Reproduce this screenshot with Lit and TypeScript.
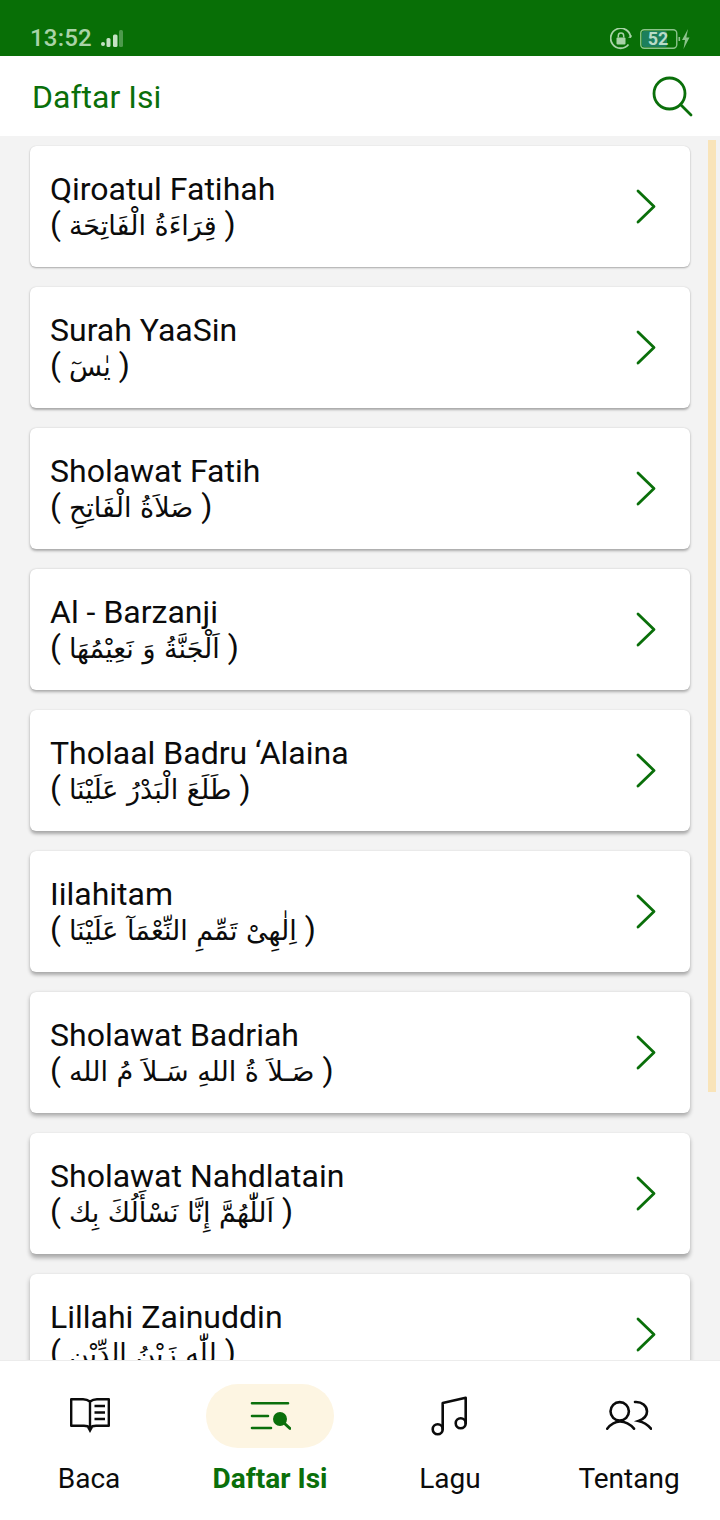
import { LitElement, html, css, svg } from "lit";
import { customElement } from "lit/decorators.js";

const ITEMS: [string, string][] = [
  ["Qiroatul Fatihah", "قِرَاءَةُ الْفَاتِحَة"],
  ["Surah YaaSin", "يٰسٓ"],
  ["Sholawat Fatih", "صَلاَةُ الْفَاتِحِ"],
  ["Al - Barzanji", "اَلْجَنَّةُ وَ نَعِيْمُهَا"],
  ["Tholaal Badru ‘Alaina", "طَلَعَ الْبَدْرُ عَلَيْنَا"],
  ["Iilahitam", "اِلٰهِىْ تَمِّمِ النِّعْمَآ عَلَيْنَا"],
  ["Sholawat Badriah", "صَـلاَ ةُ اللهِ سَـلاَ مُ الله"],
  ["Sholawat Nahdlatain", "اَللّٰهُمَّ إِنَّا نَسْأَلُكَ بِك"],
  ["Lillahi Zainuddin", "لِلّٰهِ زَيْنُ الدِّيْن"],
];

const G = "#0a6f0a";

const chevron = svg`<polyline points="2,2 18,17.5 2,33" fill="none" stroke="${G}" stroke-width="2.8" stroke-linecap="round" stroke-linejoin="round"/>`;

@customElement("app-root")
export class AppRoot extends LitElement {
  static styles = css`
    :host { display: flex; flex-direction: column; width: 720px; height: 1520px; overflow: hidden; background: #f3f3f3; font-family: Roboto, "Liberation Sans", sans-serif; color: #0b0b0b; }
    .status { height: 56px; flex: none; background: #086f06; display: flex; align-items: center; justify-content: space-between; padding: 21px 30px 0 30px; box-sizing: border-box; color: #a9d3a8; }
    .status-l, .status-r { display: flex; align-items: center; }
    .time { font-size: 24px; font-weight: 500; letter-spacing: 0.2px; margin-right: 8px; line-height: 35px; }
    .status-r { gap: 8px; }
    .battery { display: block; }
    .header { height: 80px; flex: none; background: #fff; display: flex; align-items: center; justify-content: space-between; padding: 0 18px 0 32px; box-sizing: border-box; }
    .header h1 { margin: 0; padding-top: 2px; font-size: 32px; font-weight: 400; color: #0a6f0a; }
    .list { flex: 1; min-height: 0; overflow: hidden; position: relative; padding: 10px 30px 0; display: flex; flex-direction: column; gap: 20px; }
    .thumb { position: absolute; left: 708px; top: 4px; width: 8px; height: 952px; background: #f9e4b9; }
    .card { flex: none; height: 121px; background: #fff; border-radius: 6px; display: flex; align-items: center; justify-content: space-between; padding: 0 34px 0 20px; box-sizing: border-box; }
    .texts { display: flex; flex-direction: column; padding-top: 1px; }
    .title { font-size: 32px; line-height: 37px; }
    .ar { font-size: 32px; line-height: 37px; margin-top: -2px; white-space: nowrap; }
    .ar bdi { font-family: "DejaVu Sans", "Noto Sans", sans-serif; font-size: 27px; }
    .nav { height: 160px; flex: none; background: #fff; border-top: 1px solid #ececec; box-sizing: border-box; display: grid; grid-template-columns: 178px 184px 176px 182px; }
    .tab { display: flex; flex-direction: column; align-items: center; padding-top: 23px; }
    .pill { width: 128px; height: 64px; border-radius: 32px; display: flex; align-items: center; justify-content: center; }
    .tab.on .pill { background: #fdf5e2; }
    .label { font-size: 28px; line-height: 32px; margin-top: 15px; }
    .tab.on .label { color: #0a6f0a; font-weight: 700; }
  `;

  render() {
    return html`
      <div class="status">
        <div class="status-l">
          <span class="time">13:52</span>
          <svg width="24" height="20" viewBox="0 0 24 20">
            <rect x="1" y="13" width="4" height="4" rx="2" fill="#c5e2c4"/>
            <rect x="6.500" y="9" width="4" height="9" rx="1.500" fill="#c5e2c4"/>
            <rect x="13" y="5.500" width="4.500" height="12.500" rx="1.500" fill="#c5e2c4"/>
            <rect x="19" y="1" width="4" height="17" rx="1.500" fill="#4d9a4c"/>
          </svg>
        </div>
        <div class="status-r">
          <svg width="22" height="22" viewBox="0 0 22 22">
            <path d="M18.500 16.500A10 10 0 1 1 20.600 9" fill="none" stroke="#a9d3a8" stroke-width="1.800"/>
            <path d="M18 9.500l3 .5 1-3z" fill="#a9d3a8"/>
            <rect x="6.500" y="9.500" width="9" height="7" rx="1" fill="#a9d3a8"/>
            <path d="M8.300 9.500V7.800a2.700 2.700 0 0 1 5.400 0v1.700" fill="none" stroke="#a9d3a8" stroke-width="1.500"/>
          </svg>
          <svg class="battery" width="50" height="22" viewBox="0 0 50 22">
            <rect x="0.750" y="1.750" width="36" height="18.500" rx="3.500" fill="none" stroke="#8cc38b" stroke-width="1.400"/>
            <rect x="2" y="3" width="25" height="16" rx="2" fill="#1c7f5c"/>
            <text x="18" y="17.300" text-anchor="middle" font-family="Roboto" font-size="18" font-weight="700" fill="#b8dcc6">52</text>
            <rect x="38.500" y="9" width="1.600" height="4" fill="#8cc38b"/>
            <path d="M48 1l-6 11h3L43.500 21l6-11.500h-3.200z" fill="#8cc38b"/>
          </svg>
        </div>
      </div>
      <div class="header">
        <h1>Daftar Isi</h1>
        <svg width="60" height="60" viewBox="-10 -10 60 60">
          <circle cx="17.500" cy="17.500" r="15.500" fill="none" stroke="${G}" stroke-width="2.800"/>
          <line x1="28.500" y1="28.500" x2="39" y2="39" stroke="${G}" stroke-width="2.800" stroke-linecap="round"/>
        </svg>
      </div>
      <div class="list">
        <div class="thumb"></div>
        ${ITEMS.map(([t, a], i) => html`
          <div class="card" style="box-shadow: 0 ${1 + i * 0.3}px ${2 + i * 0.35}px rgba(0,0,0,0.3), 0 0 1px rgba(0,0,0,0.12)">
            <div class="texts">
              <span class="title">${t}</span>
              <span class="ar">( <bdi dir="rtl">${a}</bdi> )</span>
            </div>
            <svg width="20" height="35" viewBox="0 0 20 35">${chevron}</svg>
          </div>`)}
      </div>
      <div class="nav">
        <div class="tab">
          <div class="pill">
            <svg width="44" height="36" viewBox="0 0 44 36" fill="none" stroke="#0b0b0b" stroke-width="2.400">
              <path d="M23 3.500C21 2 19 1.200 16 1.200H4.200V27.800H17c2.500 0 4.500.5 6 2 1.500-1.500 3.500-2 6-2h12.800V1.200H30C27 1.200 25 2 23 3.500z" stroke-linejoin="round"/>
              <path d="M23 3.500V31"/>
              <path d="M27.500 8h10.500M27.500 14.500h10.500M27.500 21h10.500"/>
              <path d="M20 29.500l3 5.500 3-5.500z" fill="#0b0b0b" stroke="none"/>
            </svg>
          </div>
          <span class="label">Baca</span>
        </div>
        <div class="tab on">
          <div class="pill">
            <svg width="42" height="30" viewBox="0 0 42 30" fill="none" stroke="${G}" stroke-width="2.600">
              <path d="M3 2.300h36M3 15h16M3 27h19" stroke-linecap="round"/>
              <circle cx="31" cy="18" r="7" fill="${G}" stroke="none"/>
              <path d="M35 22l6 5.500" stroke-width="3" stroke-linecap="round"/>
            </svg>
          </div>
          <span class="label">Daftar Isi</span>
        </div>
        <div class="tab">
          <div class="pill">
            <svg width="38" height="40" viewBox="0 0 38 40" fill="none" stroke="#0b0b0b" stroke-width="2.600" stroke-linecap="round" stroke-linejoin="round">
              <circle cx="6.700" cy="33.300" r="5"/>
              <circle cx="29.700" cy="27.300" r="5"/>
              <path d="M11.700 33.300V7L34.700 1.800v25.500"/>
            </svg>
          </div>
          <span class="label">Lagu</span>
        </div>
        <div class="tab">
          <div class="pill">
            <svg width="46" height="32" viewBox="0 0 46 32" fill="none" stroke="#0b0b0b" stroke-width="2.600" stroke-linecap="round">
              <circle cx="13.700" cy="11.300" r="9.200"/>
              <path d="M1.200 28.700C5 24 9 21.500 14 21.500s10 2.500 14 7.200"/>
              <path d="M29 2C36 1.500 41 6 41 11.500c0 4-3 7.500-8.500 9.500C37 22 41.500 24.500 45 28.700"/>
            </svg>
          </div>
          <span class="label">Tentang</span>
        </div>
      </div>
    `;
  }
}
